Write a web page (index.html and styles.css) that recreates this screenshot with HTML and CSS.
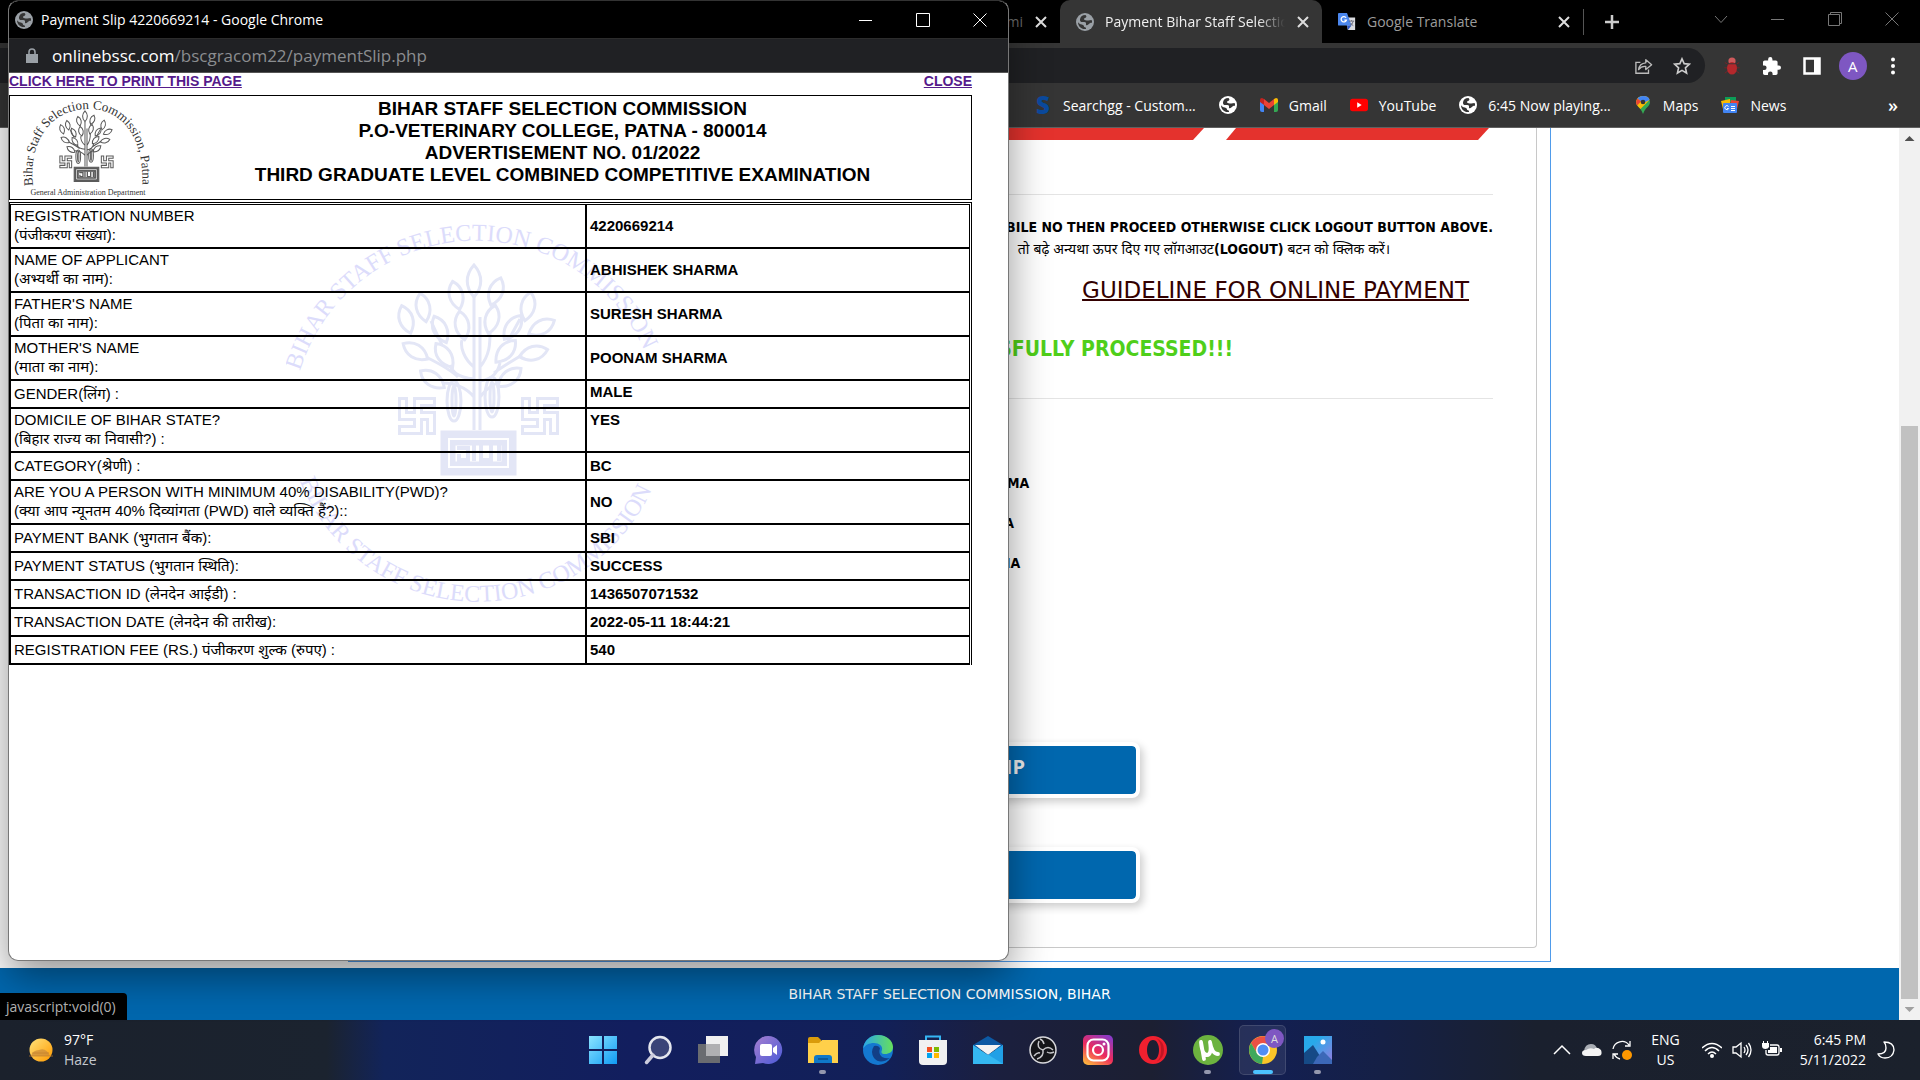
FILE: index.html
```html
<!DOCTYPE html>
<html lang="en">
<head>
<meta charset="utf-8">
<title>Payment Slip 4220669214</title>
<link rel="stylesheet" href="styles.css">
</head>
<body>
<svg class="defs" aria-hidden="true">
  <symbol id="globe" viewBox="0 0 18 18">
    <circle cx="9" cy="9" r="9" fill="currentColor"/>
    <path class="land" d="M9.500 2 C6 2 4.200 3.800 4 6.500 C3.800 9 5.500 9.300 7.500 9 C9.500 8.700 10.300 9.500 10 11 C9.700 12.300 11 12.700 12.300 11.500 C13.600 10.300 14.500 9.600 16 9.800 C16.200 8.800 16 7.700 15.600 7 C13.500 7.600 11.500 7.600 9.500 7.200 C7.500 6.800 7.500 5.400 9 5 C10.500 4.700 11 3.300 9.500 2 Z M2 9.200 C3.500 11.500 5.500 11.200 7 12 C8.300 12.700 7.500 14 9 14.300 C10 14.500 10.300 15.500 9.800 16 C5 16.500 2 13 2 9.200 Z"/>
  </symbol>
  <symbol id="cross" viewBox="0 0 14 14"><path d="M2 2 12 12 M12 2 2 12" fill="none" stroke="currentColor" stroke-width="2"/></symbol>
  <symbol id="thin-cross" viewBox="0 0 14 14"><path d="M.5 .5 13.500 13.500 M13.500 .5 .5 13.500" fill="none" stroke="currentColor"/></symbol>
  <symbol id="minimise" viewBox="0 0 14 14"><path d="M0 7.500H13" fill="none" stroke="currentColor"/></symbol>
  <symbol id="emblem" viewBox="-4 -4 172 218">
    <g fill="none" stroke="currentColor" stroke-width="3">
      <path d="M76 -2 C85 8 85 20 76 30 C67 20 67 8 76 -2 Z"/>
      <path d="M0 -14 C9 -6 9 6 0 15 C-9 6 -9 -6 0 -14 Z" transform="translate(58 28) rotate(-14)"/>
      <path d="M0 -14 C9 -6 9 6 0 15 C-9 6 -9 -6 0 -14 Z" transform="translate(98 24) rotate(20)"/>
      <path d="M0 -14 C9 -6 9 6 0 15 C-9 6 -9 -6 0 -14 Z" transform="translate(25 40) rotate(-12)"/>
      <path d="M0 -14 C9 -6 9 6 0 15 C-9 6 -9 -6 0 -14 Z" transform="translate(130 39) rotate(12)"/>
      <path d="M0 -14 C9 -6 9 6 0 15 C-9 6 -9 -6 0 -14 Z" transform="translate(8 52) rotate(-18)"/>
      <path d="M0 -14 C9 -6 9 6 0 15 C-9 6 -9 -6 0 -14 Z" transform="translate(42 62) rotate(-25)"/>
      <path d="M0 -14 C9 -6 9 6 0 15 C-9 6 -9 -6 0 -14 Z" transform="translate(64 58) rotate(-10)"/>
      <path d="M0 -14 C9 -6 9 6 0 15 C-9 6 -9 -6 0 -14 Z" transform="translate(94 52) rotate(14)"/>
      <path d="M0 -14 C9 -6 9 6 0 15 C-9 6 -9 -6 0 -14 Z" transform="translate(115 60) rotate(35)"/>
      <path d="M0 -14 C9 -6 9 6 0 15 C-9 6 -9 -6 0 -14 Z" transform="translate(144 60) rotate(62)"/>
      <path d="M0 -14 C9 -6 9 6 0 15 C-9 6 -9 -6 0 -14 Z" transform="translate(17 84) rotate(-58)"/>
      <path d="M0 -14 C9 -6 9 6 0 15 C-9 6 -9 -6 0 -14 Z" transform="translate(46 88) rotate(-35)"/>
      <path d="M0 -14 C9 -6 9 6 0 15 C-9 6 -9 -6 0 -14 Z" transform="translate(108 84) rotate(42)"/>
      <path d="M0 -14 C9 -6 9 6 0 15 C-9 6 -9 -6 0 -14 Z" transform="translate(136 86) rotate(76)"/>
      <path d="M0 -14 C9 -6 9 6 0 15 C-9 6 -9 -6 0 -14 Z" transform="translate(34 112) rotate(-55)"/>
      <path d="M0 -14 C9 -6 9 6 0 15 C-9 6 -9 -6 0 -14 Z" transform="translate(112 110) rotate(52)"/>
      <path d="M76 30 V163 M82 50 V163 M76 100 C66 92 62 80 64 73 M82 100 C92 88 92 76 92 66 M76 112 C58 110 54 104 52 98 M82 114 C96 112 100 104 102 96 M76 130 C66 118 52 116 44 116 M82 130 C90 120 96 116 102 116 M33 54 L44 78 M28 90 C44 98 54 104 60 110 M124 88 C114 94 104 100 96 106 M122 52 L110 74"/>
      <ellipse cx="56" cy="134" rx="7" ry="20"/><ellipse cx="56" cy="134" rx="2" ry="15"/>
      <ellipse cx="94" cy="130" rx="7" ry="20"/><ellipse cx="94" cy="130" rx="2" ry="15"/>
      <g stroke-width="10"><path d="M38 135H20V163H0 M5 130V149H33V168"/><path d="M161 135H143V163H123 M128 130V149H156V168"/></g>
      <g stroke="#fff" stroke-width="4"><path d="M35 135H20V163H3 M5 133V149H33V165"/><path d="M158 135H143V163H126 M128 133V149H156V165"/></g>
      <path d="M44 165H117V207H44Z" fill="currentColor"/>
      <path d="M51 172H110V200H51Z" stroke="#fff" stroke-width="2"/>
      <path d="M56 177H105V196H56Z" fill="#fff"/>
      <path d="M59 181H70V193H61V187 M76 178V194 M83 178V193H93V178 M101 178V194" stroke-width="4"/>
    </g>
  </symbol>
</svg>

<main class="desktop">
<section class="browser" aria-label="Browser window">
  <div class="tabs">
    <div class="tab tab-cut"><span class="tab-title">Admi</span><button class="x" aria-label="Close tab"><svg><use href="#cross"/></svg></button></div>
    <div class="tab tab-active"><svg class="ico globe-grey"><use href="#globe"/></svg><span class="tab-title">Payment Bihar Staff Selectic</span><button class="x" aria-label="Close tab"><svg><use href="#cross"/></svg></button></div>
    <div class="tab tab-last">
      <svg class="ico" viewBox="0 0 20 20"><path d="M8 5h11v14H11z" fill="#dadce0"/><path d="M0 1q0-1 1-1h9l5 14H1q-1 0-1-1z" fill="#4b87ee"/><path d="M10 14h5l-4 5z" fill="#2a56c6"/><path d="M9 5.300A3 3 0 1 0 9.300 8H7" fill="none" stroke="#fff" stroke-width="1.400"/><path d="M12 9h6M15 8v1M17 9q-1 4-4 5M14 11q1 2 3 3" fill="none" stroke="#667" /></svg>
      <span class="tab-title">Google Translate</span><button class="x" aria-label="Close tab"><svg><use href="#cross"/></svg></button></div>
    <button class="newtab" aria-label="New tab"><svg viewBox="0 0 16 16"><path d="M8 1V15M1 8H15" stroke="#ccc" stroke-width="2.500"/></svg></button>
    <div class="winctl">
      <button aria-label="Search tabs"><svg viewBox="0 0 14 14"><path d="M1 4 7 10.500 13 4" fill="none" stroke="currentColor"/></svg></button>
      <button aria-label="Minimise"><svg><use href="#minimise"/></svg></button>
      <button aria-label="Restore"><svg viewBox="0 0 14 14"><path d="M.5 2.500H11.500V13.500H.5ZM2.500 2.500V.5H13.500V11.500H11.500" fill="none" stroke="currentColor"/></svg></button>
      <button aria-label="Close"><svg><use href="#thin-cross"/></svg></button>
    </div>
  </div>
  <div class="toolbar">
    <div class="omnibox">
      <svg class="ico" viewBox="0 0 20 18"><path d="M6 5H1V17H15V13" fill="none" stroke="#bbb" stroke-width="1.500"/><path d="M4 13Q5 6 12 5.500V2L18.500 7.500 12 13V9.500Q7 9 4 13Z" fill="none" stroke="#bbb" stroke-width="1.500" stroke-linejoin="round"/></svg>
      <svg class="ico" viewBox="0 0 20 20"><path d="M10 2 12.400 7.400 18.200 8 13.800 12 15.100 17.800 10 14.800 4.900 17.800 6.200 12 1.800 8 7.600 7.400Z" fill="none" stroke="#ccc" stroke-width="1.800"/></svg>
    </div>
    <div class="actions">
      <svg class="ico" viewBox="0 0 20 20"><path d="M5 8 2 6M5 12H1.500M6 15 2 18M15 8l3-2M15 12h3.500M14 15l4 3" stroke="#7a2226" fill="none"/><circle cx="10" cy="4.500" r="4" fill="#cf5a5c"/><ellipse cx="10" cy="12.500" rx="5.500" ry="7" fill="#b5282c"/><path d="M5 7.500H15" stroke="#353535"/></svg>
      <svg class="ico" viewBox="2 1 21 21"><path fill="#fff" d="M20.500 11H19V7c0-1.100-.9-2-2-2h-4V3.500a2.500 2.500 0 0 0-5 0V5H4c-1.100 0-2 .9-2 2v3.800h1.500a2.700 2.700 0 0 1 0 5.400H2V20c0 1.100.9 2 2 2h3.800v-1.500a2.700 2.700 0 0 1 5.400 0V22H17c1.100 0 2-.9 2-2v-4h1.500a2.500 2.500 0 0 0 0-5z"/></svg>
      <svg class="ico" viewBox="0 0 18 18"><path d="M1.500 1.500H16.500V16.500H1.500Z" fill="none" stroke="#fff" stroke-width="2.500"/><path d="M11 1H17V17H11Z" fill="#fff"/></svg>
      <button class="avatar">A</button>
      <svg class="ico" viewBox="0 0 18 18"><g fill="#fff"><circle cx="9" cy="2.500" r="2"/><circle cx="9" cy="9" r="2"/><circle cx="9" cy="15.500" r="2"/></g></svg>
    </div>
  </div>
  <nav class="bookmarks">
    <a href="#" class="bm"><b class="s-logo">S</b>Searchgg - Custom...</a>
    <a href="#" class="bm" aria-label="Site"><svg class="ico globe-white"><use href="#globe"/></svg></a>
    <a href="#" class="bm"><svg class="ico" viewBox="0 0 18 18"><path d="M0 4V14Q0 16 2 16H4V6Z" fill="#4285f4"/><path d="M18 4V14Q18 16 16 16H14V6Z" fill="#34a853"/><path d="M4 3 9 7 14 3V9L9 13 4 9Z" fill="#ea4335"/><path d="M0 4Q0 2 2 2L4 3V9L0 6Z" fill="#c5221f"/><path d="M18 4Q18 2 16 2L14 3V9L18 6Z" fill="#fbbc04"/></svg>Gmail</a>
    <a href="#" class="bm"><svg class="ico" viewBox="0 0 20 18"><rect y="2" width="20" height="14" rx="3" fill="#f00"/><path d="M8 6 13 9 8 12Z" fill="#fff"/></svg>YouTube</a>
    <a href="#" class="bm"><svg class="ico globe-white"><use href="#globe"/></svg>6:45 Now playing...</a>
    <a href="#" class="bm"><svg class="ico" viewBox="0 0 18 18"><path d="M9 0Q15 0 16 6 16 9 12 12.500 10 15 9 18 8 15 6 12.500 2 9 2 6 3 0 9 0Z" fill="#34a853"/><path d="M9 0Q15 0 15.500 4L6.500 13Q2 9 2 6 3 0 9 0Z" fill="#fbbc04"/><path d="M9 0Q15 0 15.500 4L9 7 3.500 2.500Q5 0 9 0Z" fill="#4285f4"/><path d="M3.500 2.500 7 5.500 3 9.500Q1 6 3.500 2.500Z" fill="#ea4335"/><circle cx="9" cy="6" r="2.300" fill="#353535"/></svg>Maps</a>
    <a href="#" class="bm"><svg class="ico" viewBox="0 0 18 18"><path d="M4 1H15V6H4Z" fill="#0c9d58"/><path d="M0 5 9 3 10 14 2 13Z" fill="#fbbc04"/><path d="M10 4 18 5 16 13 9 12Z" fill="#ea4335"/><rect x="2" y="7" width="14" height="10" rx="1" fill="#4285f4"/><path d="M7.500 10.500A2 2 0 1 0 7.700 12.500H6M10 10.500H14M10 12.500H14M10 14.500H14" fill="none" stroke="#fff"/></svg>News</a>
    <span class="more">»</span>
  </nav>

  <div class="viewport">
    <div class="page">
      <div class="container">
        <div class="panel">
          <div class="menu"><a href="#" aria-label="Menu"></a><a href="#" aria-label="Logout"></a></div>
          <p class="notice">MOBILE NO THEN PROCEED OTHERWISE CLICK LOGOUT BUTTON ABOVE.</p>
          <p class="notice-hi" lang="hi">तो बढ़े अन्यथा ऊपर दिए गए लॉगआउट<b>(LOGOUT)</b> बटन को क्लिक करें।</p>
          <p class="guide"><a href="#">GUIDELINE FOR ONLINE PAYMENT</a></p>
          <p class="done">SUCCESSFULLY PROCESSED!!!</p>
          <ul class="names"><li>ABHISHEK SHARMA</li><li>SURESH SHARMA</li><li>POONAM SHARMA</li></ul>
          <div class="buttons"><button>PRINT PAY SLIP</button><button aria-label="Back"></button></div>
        </div>
      </div>
      <footer>BIHAR STAFF SELECTION COMMISSION, BIHAR</footer>
    </div>
    <div class="scroll" aria-hidden="true"><i class="up"></i><div class="gap"></div><div class="thumb"></div><i class="down"></i></div>
    <div class="status">javascript:void(0)</div>
  </div>
</section>

<section class="popup" aria-label="Payment slip window">
  <header class="title">
    <svg class="ico globe-grey"><use href="#globe"/></svg><span>Payment Slip 4220669214 - Google Chrome</span>
    <div class="popctl">
      <button aria-label="Minimise"><svg><use href="#minimise"/></svg></button>
      <button aria-label="Maximise"><svg viewBox="0 0 14 14"><path d="M.5 .5H13.500V13.500H.5Z" fill="none" stroke="currentColor"/></svg></button>
      <button aria-label="Close"><svg><use href="#thin-cross"/></svg></button>
    </div>
  </header>
  <div class="url"><svg viewBox="0 0 12 16"><path d="M0 6H12V15H0Z" fill="#9aa0a6"/><path d="M3 6V4Q3 1 6 1T9 4V6" fill="none" stroke="#9aa0a6" stroke-width="1.600"/></svg><span><b>onlinebssc.com</b>/bscgracom22/paymentSlip.php</span></div>
  <div class="slip">
    <div class="links"><a href="#">CLICK HERE TO PRINT THIS PAGE</a><a href="#">CLOSE</a></div>
    <div class="head">
      <svg class="logo" viewBox="0 0 130 102">
        <path id="arc" d="M13 90 C8 44 32 13 68 13 C104 13 126 44 122 96" fill="none"/>
        <text class="logo-arc"><textPath href="#arc">Bihar Staff Selection Commission, Patna</textPath></text>
        <use href="#emblem" x="38" y="14" width="58" height="74"/>
        <text class="logo-base" x="68" y="99" text-anchor="middle">General Administration Department</text>
      </svg>
      <h1>BIHAR STAFF SELECTION COMMISSION<br>P.O-VETERINARY COLLEGE, PATNA - 800014<br>ADVERTISEMENT NO. 01/2022<br>THIRD GRADUATE LEVEL COMBINED COMPETITIVE EXAMINATION</h1>
    </div>
    <div class="sheet">
      <svg class="mark" viewBox="0 0 400 420">
        <path id="top" d="M14 168 A184 184 0 0 1 366 168 L380 220" fill="none"/>
        <path id="bottom" d="M14 278 A191 191 0 0 0 370 276 L384 240" fill="none"/>
        <text><textPath href="#top">BIHAR STAFF SELECTION COMMISSION</textPath></text>
        <text><textPath href="#bottom">BIHAR STAFF SELECTION COMMISSION</textPath></text>
        <use href="#emblem" x="108" y="60" width="172" height="218"/>
      </svg>
      <table>
        <tr><th>REGISTRATION NUMBER<br>(पंजीकरण संख्या):</th><td>4220669214</td></tr>
        <tr><th>NAME OF APPLICANT<br>(अभ्यर्थी का नाम):</th><td>ABHISHEK SHARMA</td></tr>
        <tr><th>FATHER'S NAME<br>(पिता का नाम):</th><td>SURESH SHARMA</td></tr>
        <tr><th>MOTHER'S NAME<br>(माता का नाम):</th><td>POONAM SHARMA</td></tr>
        <tr><th>GENDER(लिंग) :</th><td class="top">MALE</td></tr>
        <tr><th>DOMICILE OF BIHAR STATE?<br>(बिहार राज्य का निवासी?) :</th><td class="top">YES</td></tr>
        <tr><th>CATEGORY(श्रेणी) :</th><td>BC</td></tr>
        <tr><th>ARE YOU A PERSON WITH MINIMUM 40% DISABILITY(PWD)?<br>(क्या आप न्यूनतम 40% दिव्यांगता (PWD) वाले व्यक्ति हैं?)::</th><td>NO</td></tr>
        <tr><th>PAYMENT BANK (भुगतान बैंक):</th><td>SBI</td></tr>
        <tr><th>PAYMENT STATUS (भुगतान स्थिति):</th><td>SUCCESS</td></tr>
        <tr><th>TRANSACTION ID (लेनदेन आईडी) :</th><td>1436507071532</td></tr>
        <tr><th>TRANSACTION DATE (लेनदेन की तारीख):</th><td>2022-05-11 18:44:21</td></tr>
        <tr><th>REGISTRATION FEE (RS.) पंजीकरण शुल्क (रुपए) :</th><td>540</td></tr>
      </table>
    </div>
  </div>
</section>
</main>

<footer class="taskbar">
  <div class="weather">
    <svg viewBox="0 0 26 26"><defs><linearGradient id="sun" x2="1" y2="1"><stop offset="0" stop-color="#ffe27a"/><stop offset="1" stop-color="#ff9a00"/></linearGradient></defs><circle cx="13" cy="13" r="11.500" fill="url(#sun)"/><path d="M3 19Q5 13 11 13 18 10 22 19Z" fill="#c98a3a" opacity=".7"/><path d="M1 19H25M4 16H21" stroke="#c07f2c" opacity=".7"/></svg>
    <div>97°F<br><span>Haze</span></div>
  </div>
  <nav class="apps">
    <button aria-label="Start"><svg viewBox="0 0 30 30"><defs><linearGradient id="win" x2="1" y2="1"><stop offset="0" stop-color="#8be4ff"/><stop offset="1" stop-color="#109bf5"/></linearGradient></defs><path d="M1 1H14V14H1ZM16 1H29V14H16ZM1 16H14V29H1ZM16 16H29V29H16Z" fill="url(#win)"/></svg></button>
    <button aria-label="Search"><svg viewBox="0 0 30 30"><circle cx="17" cy="12.500" r="10.500" fill="#3a4478" stroke="#e4e6ee" stroke-width="2.500"/><path d="M10 20 3.500 27.500" stroke="#ccd" stroke-width="3.500" stroke-linecap="round"/></svg></button>
    <button aria-label="Task view"><svg viewBox="0 0 30 30"><path d="M0 9H22V28H0Z" fill="#6a6c70"/><path d="M8 1H30V21H8Z" fill="#f0f0f0"/><path d="M8 9H22V21H8Z" fill="#b0b0b2"/></svg></button>
    <button aria-label="Chat"><svg viewBox="0 0 30 30"><defs><linearGradient id="chat" x2="1" y2="1"><stop offset="0" stop-color="#a77fcf"/><stop offset="1" stop-color="#4a5ad8"/></linearGradient></defs><path d="M15 1A14 14 0 1 1 10 28L2 29 3 22A14 14 0 0 1 15 1Z" fill="url(#chat)"/><rect x="7" y="9" width="12" height="12" rx="2" fill="#fff"/><path d="M20 13 24 10V20L20 17Z" fill="#fff"/></svg></button>
    <button aria-label="File Explorer" class="open"><svg viewBox="0 0 30 30"><path d="M0 4Q0 2 2 2H10L13 5H13V10H0Z" fill="#d99b0b"/><path d="M0 8H11L14 5H30V28H0Z" fill="#ffd04a"/><path d="M6 28V23Q6 20 9 20H21Q24 20 24 23V28Z" fill="#0f78c8"/><path d="M10 24H20" stroke="#0a4f8c" stroke-width="1.500"/></svg></button>
    <button aria-label="Edge"><svg viewBox="0 0 30 30"><defs><linearGradient id="edge" x2="1"><stop offset="0" stop-color="#2aa6e8"/><stop offset="1" stop-color="#66e05c"/></linearGradient></defs><circle cx="15" cy="15" r="15" fill="#1478d0"/><path d="M0 14C1 5 8 0 15 0 24 0 30 6 30 12 30 17 26 19 22 19 18 19 18 17 19 15 20 11 16 8 11 8 6 8 2 10 0 14Z" fill="url(#edge)"/><path d="M11 11Q7 17 11 23 17 30 27 23 23 24 19 22 15 19 17 13 15 10 11 11Z" fill="#123f86"/></svg></button>
    <button aria-label="Store"><svg viewBox="0 0 30 30"><path d="M8 6V1.500H22V6" fill="none" stroke="#35b5f3" stroke-width="2"/><path d="M1 5H29V26Q29 30 25 30H5Q1 30 1 26Z" fill="#f1f1f1"/><path d="M9 12H14V17H9Z" fill="#f25022"/><path d="M16 12H21V17H16Z" fill="#7fba00"/><path d="M9 18H14V23H9Z" fill="#00a4ef"/><path d="M16 18H21V23H16Z" fill="#ffb900"/></svg></button>
    <button aria-label="Mail"><svg viewBox="0 0 30 30"><path d="M0 10 15 1 30 10V15H0Z" fill="#0c59a4"/><path d="M2 10H28L15 20Z" fill="#f3f3f3"/><path d="M0 10 15 20 30 10V29H0Z" fill="#35b8f1"/><path d="M30 10V29L8 15 15 20Z" fill="#1490df" opacity=".6"/></svg></button>
    <button aria-label="OBS"><svg viewBox="0 0 30 30"><circle cx="15" cy="15" r="13" fill="#151519" stroke="#d8d8dc" stroke-width="1.500"/><path d="M15 15Q8 13 11 6M15 15Q20 10 25 15M15 15Q16 22 9 24M12 4Q15 5 16 9M26 17Q22 19 19 17M6 21Q9 17 12 18" fill="none" stroke="#c8c8cc" stroke-width="1.500"/></svg></button>
    <button aria-label="Instagram"><svg viewBox="0 0 30 30"><defs><linearGradient id="ig" x1=".2" y1="1" x2=".8" y2="0"><stop offset="0" stop-color="#fdb13f"/><stop offset=".45" stop-color="#ee2a5c"/><stop offset="1" stop-color="#8a3ac8"/></linearGradient></defs><rect width="30" height="30" rx="5" fill="url(#ig)"/><rect x="4.500" y="4.500" width="21" height="21" rx="6" fill="none" stroke="#fff" stroke-width="2.200"/><circle cx="15" cy="15" r="5" fill="none" stroke="#fff" stroke-width="2.200"/><circle cx="21" cy="9" r="1.500" fill="#fff"/></svg></button>
    <button aria-label="Opera"><svg viewBox="0 0 30 30"><path fill-rule="evenodd" d="M15 1A14 14 0 1 1 15 29A14 14 0 1 1 15 1ZM15 5C7 5 7 25 15 25S23 5 15 5Z" fill="#f0202f"/><path d="M18 3A13 13 0 0 1 18 27Q23 24 23 15T18 3Z" fill="#a30f1c" opacity=".6"/></svg></button>
    <button aria-label="uTorrent" class="open"><svg viewBox="0 0 30 30"><circle cx="15" cy="15" r="15" fill="#6cb33f"/><path d="M8 7 11 24M8 7Q9 20 14 20 19 20 17 7M17 7Q19 19 25 19" fill="none" stroke="#fff" stroke-width="3.800" stroke-linecap="round"/></svg></button>
    <button aria-label="Chrome" class="current"><svg viewBox="0 0 30 30"><circle cx="15" cy="15" r="14" fill="#fbc116"/><path d="M3 8A14 14 0 0 1 27 8L15 9 9 18Z" fill="#ea4335"/><path d="M3 8 9.500 19 15 22 14 29A14 14 0 0 1 3 8Z" fill="#2fa24f"/><circle cx="15" cy="15" r="7" fill="#fff"/><circle cx="15" cy="15" r="5.500" fill="#4285f4"/></svg><span class="badge">A</span></button>
    <button aria-label="Photos" class="open"><svg viewBox="0 0 30 30"><defs><linearGradient id="ph" x2="1" y2="1"><stop offset=".3" stop-color="#28a9ea"/><stop offset="1" stop-color="#9a7be0"/></linearGradient></defs><path d="M1 1H29V29H1Z" fill="url(#ph)"/><path d="M1 18 10 10 22 29H1Z" fill="#164a86"/><path d="M14 22 20 16 29 25V29H10Z" fill="#3c68b8"/><circle cx="20" cy="7" r="2.500" fill="#fff"/></svg></button>
  </nav>
  <div class="tray">
    <svg class="tiny" viewBox="0 0 20 20"><path d="M2 14 10 6 18 14" fill="none" stroke="#fff" stroke-width="1.500"/></svg>
    <svg class="tiny" viewBox="0 0 20 20"><path d="M2 11Q3 4 9 4 14 4 15 9L8 14Z" fill="#a9adb4"/><path d="M4 16Q0 16 0 13 0 10 4 10 8 7 12 9 15 6 19 10 21 16 16 16Z" fill="#f4f4f4"/></svg>
    <svg class="tiny" viewBox="0 0 20 20"><path d="M1 9A9 9 0 0 1 17 5M18 1V6H13M1 19V14H6M2 14Q4 18 8 19" fill="none" stroke="#fff" stroke-width="1.300"/><circle cx="15" cy="15" r="5" fill="#ff9800"/></svg>
    <div class="lang">ENG<br>US</div>
    <svg class="tiny" viewBox="0 0 20 20"><path d="M0 8Q10-1 20 8M3 11Q10 4 17 11M6 14Q10 10 14 14" fill="none" stroke="#fff" stroke-width="1.500"/><circle cx="10" cy="16" r="2" fill="#fff"/></svg>
    <svg class="tiny" viewBox="0 0 20 20"><path d="M1 7H4L9 3V17L4 13H1Z" fill="none" stroke="#fff" stroke-width="1.300"/><path d="M12 7Q14 10 12 13M14 5Q18 10 14 15M16.500 3Q21.500 10 16.500 17" fill="none" stroke="#fff" stroke-width="1.300"/></svg>
    <svg class="tiny" viewBox="0 0 20 20"><path d="M8 5H15Q17 5 17 7V13Q17 15 15 15H6Q4 15 4 13V10" fill="none" stroke="#fff" stroke-width="1.300"/><path d="M8 7H15V13H6V10H8ZM18 8H20V12H18ZM0 3H7V7Q6 9 3.500 9 0 9 0 6ZM1 1H2V3H1ZM5 1H6V3H5Z" fill="#fff"/></svg>
    <div class="clock">6:45 PM<br>5/11/2022</div>
    <svg class="tiny" viewBox="0 0 20 20"><path d="M8 2Q18 2 18 10 17 18 9 18 4 18 2 14 10 14 10 8 10 4 8 2Z" fill="none" stroke="#fff" stroke-width="1.400" stroke-linejoin="round"/></svg>
  </div>
</footer>
</body>
</html>
```
FILE: styles.css
```css
* { box-sizing: border-box; }
body { margin: 0; min-height: 100vh; display: flex; flex-direction: column; background: #fff; font-family: "Open Sans", "Noto Sans", sans-serif; font-size: 15px; overflow: hidden; }
button { border: 0; padding: 0; background: none; color: inherit; font: inherit; display: flex; align-items: center; justify-content: center; }
p, ul, h1 { margin: 0; padding: 0; list-style: none; }
svg { display: block; flex: none; }
.defs { position: absolute; width: 0; height: 0; }
.ico { width: 18px; height: 18px; }
.land { fill: #353535; }
.globe-grey { color: #9aa0a6; }
.globe-white { color: #fff; }

.desktop { flex: 1; display: flex; position: relative; }
.browser { flex: 1; display: flex; flex-direction: column; min-width: 0; }

/* tab strip */
.tabs { height: 43px; background: #000; display: flex; align-items: center; justify-content: flex-end; color: #9c9c9c; font-size: 14px; }
.tab { display: flex; align-items: center; height: 43px; gap: 11px; padding: 0 12px 0 16px; }
.tab-title { flex: 1; white-space: nowrap; overflow: hidden; }
.x { width: 14px; height: 14px; color: #ddd; }
.x svg { width: 14px; height: 14px; }
.tab-cut { width: 262px; color: #666; }
.tab-cut .tab-title { text-align: right; }
.tab-active { width: 262px; background: #353535; color: #f0f0f0; border-radius: 10px 10px 0 0; }
.tab-active .tab-title { -webkit-mask-image: linear-gradient(90deg, #000 85%, transparent); mask-image: linear-gradient(90deg, #000 85%, transparent); }
.tab-last { width: 262px; height: 26px; border-right: 1px solid #555; }
.newtab { width: 56px; height: 43px; }
.newtab svg { width: 16px; height: 16px; }
.winctl { display: flex; width: 280px; justify-content: flex-end; color: #777; padding-bottom: 6px; }
.winctl button { width: 57px; height: 37px; }
.winctl svg { width: 14px; height: 14px; }

.toolbar { height: 40px; background: #353535; display: flex; align-items: flex-end; }
.omnibox { flex: 1; height: 35px; background: #202124; border-radius: 0 18px 18px 0; display: flex; align-items: center; justify-content: flex-end; gap: 20px; padding-right: 14px; }
.actions { width: 215px; height: 35px; display: grid; grid-template-columns: repeat(5, 1fr); align-items: center; justify-items: center; padding: 0 7px; }
.avatar { width: 28px; height: 28px; border-radius: 50%; background: #7e57c2; color: #fff; font-size: 15px; }

.bookmarks { height: 45px; background: #353535; border-bottom: 1px solid #606060; display: flex; align-items: center; gap: 23px; padding: 0 22px 0 1034px; color: #fff; font-size: 14px; }
.bm { display: flex; align-items: center; gap: 11px; color: #fff; text-decoration: none; white-space: nowrap; }
.s-logo { width: 18px; color: #0b4a9e; font: 900 24px/18px "Open Sans", sans-serif; text-align: center; }
.more { margin-left: auto; font-size: 18px; font-weight: 600; }

/* page */
.viewport { flex: 1; display: flex; position: relative; background: #fff; }
.page { flex: 1; display: flex; flex-direction: column; font-family: "DejaVu Sans Condensed", "DejaVu Sans", "Noto Sans Devanagari", sans-serif; }
.container { width: 1203px; max-width: 100%; margin: 0 auto 6px; border: 1px solid #4f9bea; border-top: 0; padding: 0 13px 13px; }
.panel { border: 1px solid #c8c8c8; border-top: 0; border-radius: 0 0 4px 4px; padding: 0 43px 44px; }
.menu { display: flex; justify-content: flex-end; gap: 22px; padding-right: 4px; height: 67px; border-bottom: 1px solid #e4e4e4; }
.menu a { width: 263px; height: 12px; background: #e4322d; clip-path: polygon(10px 0, 100% 0, calc(100% - 11px) 100%, 0 100%); }
.notice { padding-top: 21px; text-align: right; font-weight: bold; font-size: 14px; line-height: 22px; }
.notice-hi { padding-right: 103px; text-align: right; font-size: 14px; line-height: 22px; -webkit-text-stroke: 0; }
.guide { padding: 15px 24px 0 0; text-align: right; font-family: "DejaVu Sans", sans-serif; font-size: 23px; line-height: 30px; }
.guide a { color: #300; text-decoration-thickness: 2px; }
.done { padding: 32px 260px 37px 0; text-align: right; color: #4fcf1a; font-weight: bold; font-size: 21px; line-height: 24px; border-bottom: 1px solid #e4e4e4; }
.names { padding: 64px 0 0 485px; font-weight: bold; font-size: 14px; line-height: 40px; }
.buttons { margin-top: 159px; display: flex; flex-direction: column; align-items: center; gap: 49px; }
.buttons button { width: 381px; height: 56px; padding-bottom: 8px; border: 4px solid #fff; border-radius: 8px; background: #0067ae; background-clip: padding-box; box-shadow: 3px 4px 8px rgba(0, 0, 0, .2); color: #eee; font-family: "Open Sans", sans-serif; font-weight: bold; font-size: 20px; }
.page footer { flex: 1; background: #0067ae; color: #fff; display: flex; align-items: center; justify-content: center; font-family: "DejaVu Sans", sans-serif; font-size: 14px; }
.scroll { width: 21px; background: #f1f1f1; display: flex; flex-direction: column; align-items: center; }
.scroll i { width: 10px; height: 5px; margin: 8px 0; background: #505050; clip-path: polygon(0 100%, 50% 0, 100% 100%); }
.scroll .down { background: #a0a0a0; clip-path: polygon(0 0, 100% 0, 50% 100%); }
.gap { flex: 277; }
.thumb { flex: 573; width: 17px; background: #c1c1c1; }
.status { position: absolute; left: 0; bottom: 0; height: 27px; width: 127px; padding-left: 6px; background: #000; color: #b4b4b4; border-radius: 0 4px 0 0; font-size: 14px; line-height: 27px; }

/* popup window */
.popup { position: absolute; left: 8px; top: 0; width: 1001px; height: calc(100% - 59px); border: 1px solid #777; border-top-color: #333; border-radius: 10px; background: #fff; overflow: hidden; box-shadow: 0 16px 40px rgba(0, 0, 0, .42); display: flex; flex-direction: column; }
.title { height: 37px; background: #000; color: #fff; display: flex; align-items: center; gap: 8px; padding-left: 6px; font-size: 14px; }
.title .land { fill: #000; }
.popctl { display: flex; margin-left: auto; }
.popctl button { width: 57px; height: 37px; }
.popctl svg { width: 14px; height: 14px; }
.url { height: 35px; background: #202124; border-top: 1px solid #2c2c2c; border-bottom: 1px solid #555; color: #8b8d90; display: flex; align-items: center; gap: 14px; padding-left: 17px; font-size: 17px; }
.url svg { width: 12px; height: 16px; }
.url b { color: #fff; font-weight: normal; }
.slip { padding-right: 36px; font-family: "Liberation Sans", "Noto Sans Devanagari", sans-serif; color: #000; }
.links { display: flex; justify-content: space-between; height: 22px; font-size: 14px; font-weight: bold; line-height: 16px; }
.links a { color: #551a8b; }
.head { height: 105px; border: 1px solid #000; display: flex; }
.logo { width: 130px; height: 102px; margin-left: 10px; color: #5a5a5a; }
.logo text { font-family: "Liberation Serif", serif; fill: #333; }
.logo-arc { font-size: 13px; }
.logo-base { font-size: 8px; }
.head h1 { flex: 1; padding: 2px 0 0 4px; text-align: center; font-size: 19px; line-height: 22px; }
.sheet { position: relative; margin-top: 2px; border: 1px solid #000; border-bottom: 0; padding: 1px 1px 0 0; }
.mark { position: absolute; left: 276px; top: 0; width: 400px; height: 420px; color: #e3e6f6; pointer-events: none; }
.mark text { font: 24px "Liberation Serif", serif; fill: #dcdcfb; }
table { position: relative; width: 100%; border-collapse: separate; border-spacing: 0; border: 1px solid #000; border-bottom: 0; font-size: 15px; line-height: 19px; table-layout: fixed; }
th, td { text-align: left; vertical-align: middle; height: 28px; padding: 1px 3px 3px; border-bottom: 2px solid #000; white-space: nowrap; }
th { width: 576px; font-weight: normal; border-right: 2px solid #000; }
td { font-weight: bold; }
td.top { vertical-align: top; }

/* taskbar */
.taskbar { height: 60px; display: grid; grid-template-columns: 1fr auto 1fr; align-items: center; color: #fff; font-size: 14px; line-height: 20px; background: linear-gradient(90deg, #1b212c 0, #1b232f 17%, #12245a 20%, #121e5e 33%, #122058 46%, #1b1f3e 52%, #1c1f32 60%, #131f52 66%, #152046 72%, #1a202e 80%, #1b212c 100%); }
.weather { display: flex; align-items: center; gap: 10px; padding-left: 28px; }
.weather svg { width: 26px; height: 26px; }
.weather span { color: #c4c8ce; }
.apps { display: flex; }
.apps button { position: relative; width: 55px; height: 60px; }
.apps svg { width: 30px; height: 30px; }
.open::after, .current::after { content: ""; position: absolute; bottom: 6px; width: 7px; height: 4px; border-radius: 2px; background: #9498ae; }
.current::after { width: 20px; background: #4cc2ff; }
.current::before { content: ""; position: absolute; left: 4px; right: 4px; top: 5px; bottom: 5px; border: 1px solid rgba(255, 255, 255, .12); border-radius: 5px; background: rgba(255, 255, 255, .08); }
.badge { position: absolute; right: 6px; top: 9px; width: 19px; height: 19px; border-radius: 50%; background: #7e57c2; color: #ddd; font-size: 11px; line-height: 19px; }
.tray { display: flex; align-items: center; justify-content: flex-end; gap: 10px; padding-right: 24px; }
.tiny { width: 20px; height: 20px; }
.lang { margin: 0 12px 0 9px; text-align: center; }
.clock { margin: 0 0 0 8px; text-align: right; }
```
